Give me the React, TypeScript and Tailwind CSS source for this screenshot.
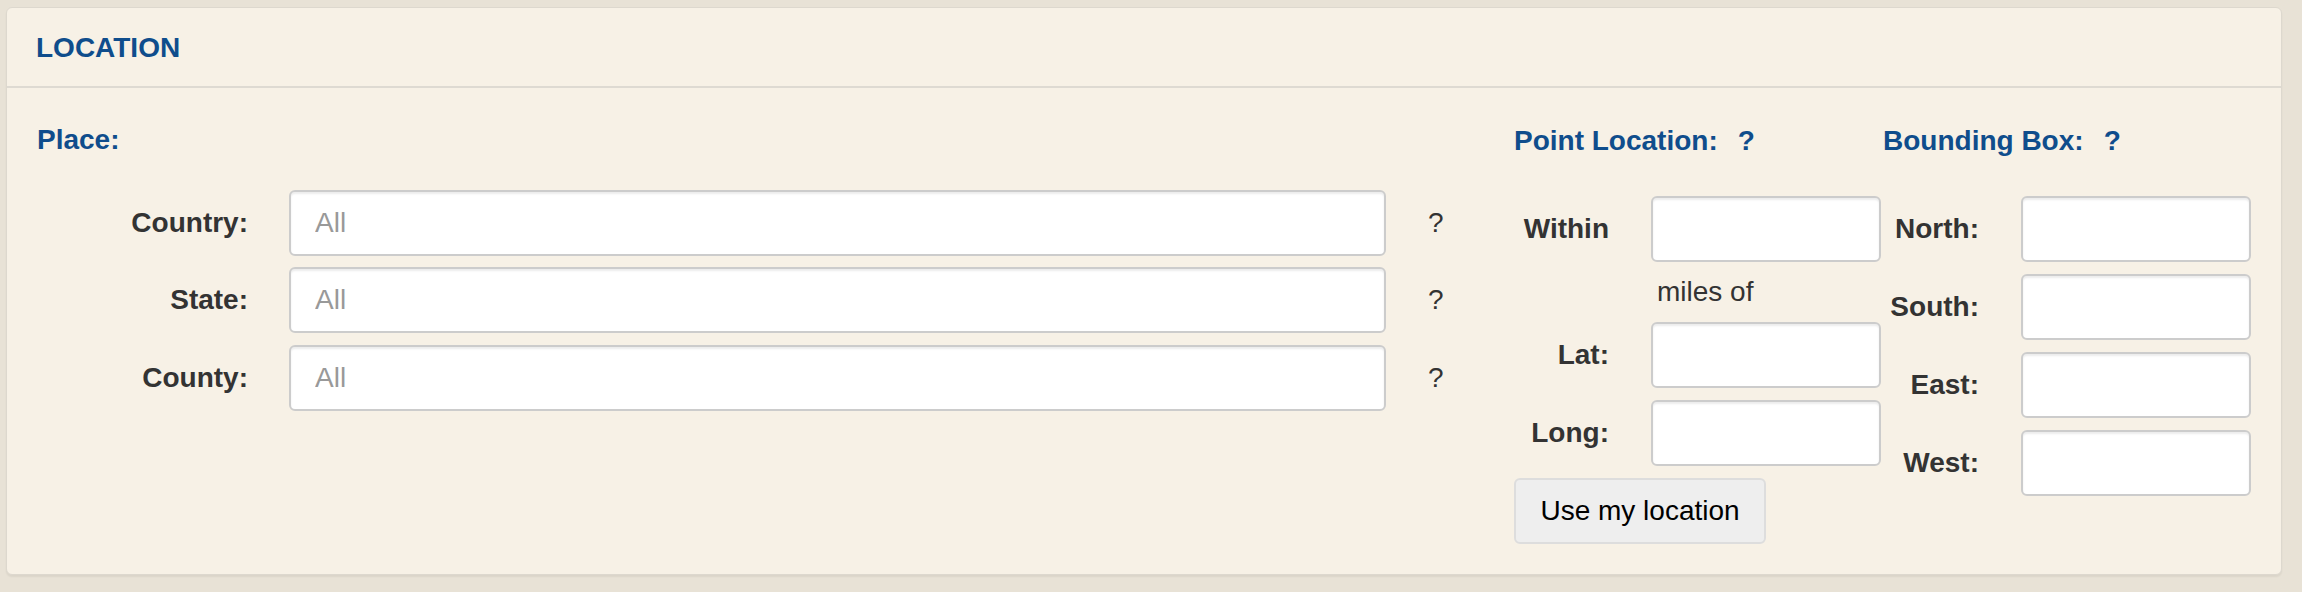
import React from 'react';

const font = { fontFamily: '"Liberation Sans", Arial, Helvetica, sans-serif' };

const inputCls =
  'h-[66px] w-[230px] rounded-[6px] border-2 border-[#cccccc] bg-white shadow-[inset_0_2px_2px_rgba(0,0,0,0.08)] outline-none';

const Field = ({ label, labelW }: { label: string; labelW: string }) => (
  <div className="flex items-center">
    <span className={`${labelW} text-right text-[28px] font-bold leading-[32px] text-[#333333]`}>{label}</span>
    <input className={`ml-[42px] ${inputCls}`} />
  </div>
);

const PlaceRow = ({ label, className = '' }: { label: string; className?: string }) => (
  <div className={`flex items-center ${className}`}>
    <span className="w-[211px] text-right text-[28px] font-bold leading-[32px] text-[#333333]">{label}</span>
    <input
      placeholder="All"
      className="ml-[41px] h-[66px] w-[1097px] rounded-[6px] border-2 border-[#cccccc] bg-white pl-[24px] text-[28px] text-[#555555] shadow-[inset_0_2px_2px_rgba(0,0,0,0.08)] outline-none placeholder:text-[#999999]"
    />
    <span className="ml-[42px] text-[28px] leading-[32px] text-[#333333]">?</span>
  </div>
);

export default function App() {
  return (
    <div className="h-[592px] w-[2302px] bg-[#e8e2d6] pl-[6px] pr-[20px] pt-[7px]" style={font}>
      <div className="h-[568px] rounded-[6px] border border-[#ddd8ce] bg-[#f7f1e6] shadow-[0_2px_2px_rgba(0,0,0,0.06)]">
        <div className="flex h-[80px] items-center border-b-2 border-[#dedad2] pl-[29px] pt-[2px]">
          <h3 className="text-[28px] font-bold leading-[32px] text-[#0f4d8c]">LOCATION</h3>
        </div>

        <div className="flex pl-[30px] pt-[36px]">
          {/* place */}
          <div className="w-[1477px]">
            <h4 className="h-[32px] text-[28px] font-bold leading-[32px] text-[#0f4d8c]">Place:</h4>
            <PlaceRow label="Country:" className="mt-[34px]" />
            <PlaceRow label="State:" className="mt-[11px]" />
            <PlaceRow label="County:" className="mt-[12px]" />
          </div>

          {/* point location */}
          <div className="w-[369px] pt-[1px]">
            <h4 className="flex h-[32px] text-[28px] font-bold leading-[32px] text-[#0f4d8c]">
              <span>Point Location:</span>
              <span className="ml-[20px]">?</span>
            </h4>
            <div className="mt-[39px]">
              <Field label="Within" labelW="w-[95px]" />
            </div>
            <div className="flex h-[60px] items-center pl-[143px] text-[28px] leading-[32px] text-[#333333]">miles of</div>
            <Field label="Lat:" labelW="w-[95px]" />
            <div className="mt-[12px]">
              <Field label="Long:" labelW="w-[95px]" />
            </div>
            <button className="mt-[12px] h-[66px] w-[252px] rounded-[6px] border-2 border-[#dddddd] bg-[#eeeeee] text-[28px] leading-[32px] text-black">
              Use my location
            </button>
          </div>

          {/* bounding box */}
          <div className="pt-[1px]">
            <h4 className="flex h-[32px] text-[28px] font-bold leading-[32px] text-[#0f4d8c]">
              <span>Bounding Box:</span>
              <span className="ml-[20px]">?</span>
            </h4>
            <div className="mt-[39px] flex flex-col gap-[12px]">
              <Field label="North:" labelW="w-[96px]" />
              <Field label="South:" labelW="w-[96px]" />
              <Field label="East:" labelW="w-[96px]" />
              <Field label="West:" labelW="w-[96px]" />
            </div>
          </div>
        </div>
      </div>
    </div>
  );
}
